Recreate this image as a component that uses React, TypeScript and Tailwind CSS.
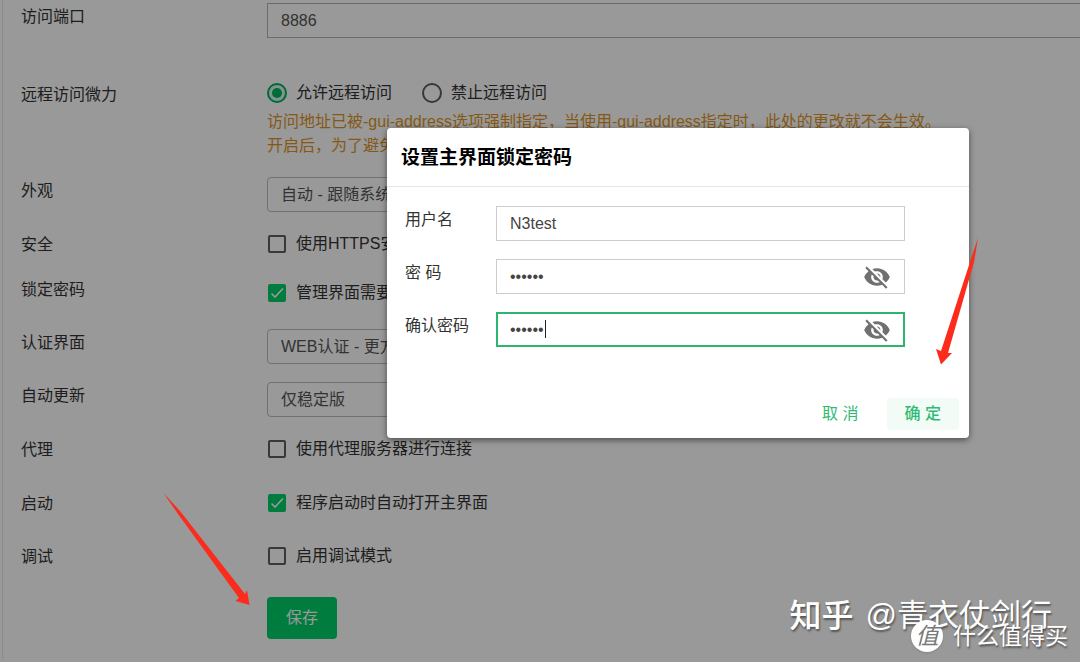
import React from "react";
import clsx from "clsx";
import { MdVisibilityOff } from "react-icons/md";

type RowProps = {
  label: string;
  htmlFor?: string;
  className?: string;
  children: React.ReactNode;
};

const Row = ({ label, htmlFor, className, children }: RowProps) => (
  <div className={clsx("flex items-start", className)}>
    <label htmlFor={htmlFor} className="w-[246px] shrink-0 leading-7">
      {label}
    </label>
    <div className="min-w-0 flex-1">{children}</div>
  </div>
);

type CheckProps = {
  id: string;
  text: string;
  checked?: boolean;
};

const Check = ({ id, text, checked }: CheckProps) => (
  <label htmlFor={id} className="flex items-center gap-[9px] leading-[26px]">
    <span className="relative flex size-5 items-center justify-center">
      <input
        id={id}
        type="checkbox"
        defaultChecked={checked}
        className="peer size-[18px] appearance-none rounded-xs border-2 border-[#5e5e5e] checked:border-[#00cf69] checked:bg-[#00cf69]"
      />
      <svg
        viewBox="0 0 18 18"
        className="pointer-events-none absolute hidden size-[18px] peer-checked:block"
        fill="none"
        stroke="#fff"
        strokeWidth="1.6"
      >
        <path d="M3.5 9.5 7 13l8-8.5" />
      </svg>
    </span>
    {text}
  </label>
);

type RadioProps = {
  id: string;
  text: string;
  checked?: boolean;
};

const Radio = ({ id, text, checked }: RadioProps) => (
  <label htmlFor={id} className="flex items-center gap-[9px] leading-6">
    <span className="relative flex size-5 items-center justify-center">
      <input
        id={id}
        type="radio"
        name="remote"
        defaultChecked={checked}
        className="peer size-5 appearance-none rounded-full border-2 border-[#5e5e5e] checked:border-[#00b060] checked:bg-[#d8f8e6]"
      />
      <span className="pointer-events-none absolute hidden size-[10px] rounded-full bg-[#00b45f] peer-checked:block" />
    </span>
    {text}
  </label>
);

type SelectProps = {
  id: string;
  value: string;
};

const Select = ({ id, value }: SelectProps) => (
  <select
    id={id}
    className="block h-[35px] w-full max-w-[480px] appearance-none rounded-sm border border-[#bdbdbd] px-[13px] text-[#555]"
  >
    <option>{value}</option>
  </select>
);

type FieldProps = {
  id: string;
  label: string;
  value: string;
  secret?: boolean;
  focused?: boolean;
};

const Field = ({ id, label, value, secret, focused }: FieldProps) => (
  <div className="flex items-start">
    <label htmlFor={id} className="w-[91px] shrink-0 leading-7 text-[#333]">
      {label}
    </label>
    <div className="relative flex-1">
      <input
        id={id}
        type={secret ? "password" : "text"}
        defaultValue={value}
        className={clsx(
          "block h-[35px] w-full text-[#444] outline-none",
          focused
            ? "border-2 border-[#2db56f] px-3"
            : "border border-[#ccc] px-[13px]"
        )}
      />
      {focused && (
        <span className="absolute top-2 left-[49px] h-[18px] w-px bg-[#222]" />
      )}
      {secret && (
        <button
          type="button"
          aria-label="显示密码"
          className="absolute top-1 right-[14px] text-[#707070]"
        >
          <MdVisibilityOff size={28} />
        </button>
      )}
    </div>
  </div>
);

const Settings = () => (
  <form className="ml-0.5 border-l border-[#e8e8e8] pt-[3px] pb-5 pl-[18px] text-[#333]">
    <Row label="访问端口" htmlFor="port" className="min-h-[78px]">
      <input
        id="port"
        defaultValue="8886"
        className="block h-[35px] w-full border border-r-0 border-[#b5b5b5] px-[13px] text-[#555]"
      />
    </Row>
    <Row label="远程访问微力" className="min-h-[96px]">
      <div className="flex gap-[30px]">
        <Radio id="allow" text="允许远程访问" checked />
        <Radio id="deny" text="禁止远程访问" />
      </div>
      <p className="mt-[5px] leading-6 text-[#dd9527]">
        访问地址已被-gui-address选项强制指定，当使用-gui-address指定时，此处的更改就不会生效。
        <br />
        开启后，为了避免安全风险，请设置锁定密码。
      </p>
    </Row>
    <Row label="外观" htmlFor="theme" className="min-h-[54px]">
      <Select id="theme" value="自动 - 跟随系统" />
    </Row>
    <Row label="安全" className="min-h-[45px]">
      <Check id="https" text="使用HTTPS安全连接" />
    </Row>
    <Row label="锁定密码" className="min-h-[53px]">
      <div className="pt-1">
        <Check id="lock" text="管理界面需要密码" checked />
      </div>
    </Row>
    <Row label="认证界面" htmlFor="auth" className="min-h-[53px]">
      <Select id="auth" value="WEB认证 - 更方便" />
    </Row>
    <Row label="自动更新" htmlFor="update" className="min-h-[54px]">
      <Select id="update" value="仅稳定版" />
    </Row>
    <Row label="代理" className="min-h-[54px]">
      <Check id="proxy" text="使用代理服务器进行连接" />
    </Row>
    <Row label="启动" className="min-h-[53px]">
      <Check id="startup" text="程序启动时自动打开主界面" checked />
    </Row>
    <Row label="调试" className="min-h-[54px]">
      <Check id="debug" text="启用调试模式" />
    </Row>
    <button
      type="button"
      className="ml-[246px] block h-[42px] rounded-sm bg-[#00cf69] px-[19px] text-white"
    >
      保存
    </button>
  </form>
);

const PasswordDialog = () => (
  <div
    role="dialog"
    aria-labelledby="dialog-title"
    className="w-[582px] rounded-sm bg-white shadow-[0_2px_6px_rgba(0,0,0,0.5)]"
  >
    <h2
      id="dialog-title"
      className="border-b border-[#e5e5e5] px-[14px] pt-4 pb-[14px] text-[19px] leading-7 font-bold text-black"
    >
      设置主界面锁定密码
    </h2>
    <div className="flex flex-col gap-[18px] pt-[19px] pr-16 pl-[18px]">
      <Field id="user" label="用户名" value="N3test" />
      <Field id="password" label="密 码" value="123456" secret />
      <Field id="confirm" label="确认密码" value="123456" secret focused />
    </div>
    <div className="flex justify-end gap-[10px] pt-[51px] pr-[10px] pb-2 text-[#2fbb74]">
      <button type="button" className="h-8 px-[18px]">
        取 消
      </button>
      <button type="button" className="h-8 rounded-sm bg-[#f3fbf6] px-[18px] font-medium">
        确 定
      </button>
    </div>
  </div>
);

const Arrows = () => (
  <svg
    viewBox="0 0 1080 663"
    className="pointer-events-none absolute top-0 left-0 h-[663px] w-[1080px]"
    fill="#fb2c1c"
  >
    <path d="M163.500 493 180 511 245 594 247 590 249.500 605 235.500 601 239 598 178 514Z" />
    <path d="M978 238 974 262 948 353 952 353 941 364.500 936 349 941 351 970 262Z" />
  </svg>
);

const Watermarks = () => (
  <div className="pointer-events-none absolute right-3 bottom-2 text-white [text-shadow:1px_2px_2px_rgba(0,0,0,0.45)]">
    <p className="flex items-center gap-3 pr-4 pb-4 text-[31px] leading-[44px]">
      <span className="text-[32px] font-medium">知乎</span>
      <span>@青衣仗剑行</span>
    </p>
    <p className="absolute right-0 bottom-0 flex items-center gap-[10px] text-[23px] leading-9 whitespace-nowrap">
      <span className="flex size-8 items-center justify-center rounded-full bg-white text-[23px] text-[#777] italic shadow [text-shadow:none]">
        值
      </span>
      什么值得买
    </p>
  </div>
);

const App = () => {
  return (
    <div className="relative min-h-[calc(100vh-1px)] overflow-hidden bg-white font-['Liberation_Sans','Noto_Sans_CJK_SC',sans-serif] text-base">
      <Settings />
      <div className="absolute inset-0 flex items-start justify-end bg-black/40 pt-32 pr-[111px]">
        <PasswordDialog />
      </div>
      <Arrows />
      <Watermarks />
    </div>
  );
};

export default App;
